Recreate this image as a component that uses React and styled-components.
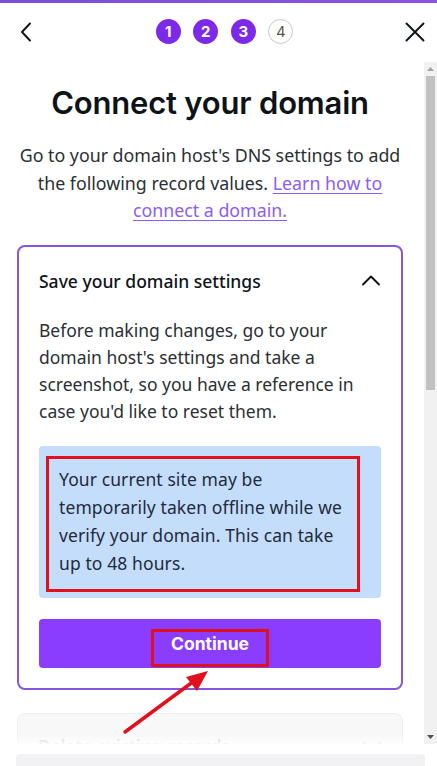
import React from "react";
import styled, { createGlobalStyle } from "styled-components";

const Global = createGlobalStyle`
  html, body { margin: 0; padding: 0; background: #fff; }
  body { font-family: "Noto Sans", "Open Sans", sans-serif; color: #0e1318; }
  * { box-sizing: border-box; }
`;

const Page = styled.div`
  position: relative;
  width: 437px;
  height: 766px;
  overflow: hidden;
  display: flex;
  flex-direction: column;
  background: #fff;
`;

const TopLine = styled.div`
  height: 3px;
  background: linear-gradient(90deg, #7b4fd6, #8a52e0);
  flex: none;
`;

const Header = styled.div`
  height: 57px;
  flex: none;
  display: flex;
  align-items: center;
  justify-content: space-between;
  padding: 0 10px 0 14px;
`;

const IconButton = styled.button`
  width: 24px;
  height: 24px;
  border: 0;
  background: none;
  padding: 0;
  display: flex;
  align-items: center;
  justify-content: center;
  color: #0e1318;
`;

const Steps = styled.div`
  display: flex;
  gap: 12.5px;
  margin-left: 8px;
`;

const Step = styled.div`
  width: 25px;
  height: 25px;
  border-radius: 50%;
  display: flex;
  align-items: center;
  justify-content: center;
  font-family: "Inter", "Liberation Sans", sans-serif;
  font-size: 15px;
  font-weight: ${(p) => (p.$done ? 700 : 400)};
  background: ${(p) => (p.$done ? "#7d2ae8" : "#fff")};
  color: ${(p) => (p.$done ? "#fff" : "#555")};
  border: ${(p) => (p.$done ? "none" : "1px solid #c9c9cc")};
`;

const Body = styled.div`
  flex: 1;
  display: flex;
  min-height: 0;
`;

const Content = styled.div`
  position: relative;
  width: 424px;
  padding: 0 21px 0 17px;
  overflow: hidden;
`;

const Title = styled.h1`
  margin: 24px 0 0;
  text-align: center;
  font-family: "Inter", "Liberation Sans", sans-serif;
  font-weight: 600;
  font-size: 31px;
  line-height: 38px;
  letter-spacing: -0.2px;
  color: #0e1318;
`;

const Intro = styled.p`
  margin: 20px 0 0;
  text-align: center;
  font-size: 17.8px;
  line-height: 27.5px;
  color: #2b2f33;
`;

const Link = styled.a`
  color: #8b5cf6;
  text-decoration: underline;
  text-underline-offset: 3px;
  text-decoration-thickness: 1px;
`;

const Card = styled.div`
  margin-top: 20px;
  border: 2px solid #8457e0;
  border-radius: 8px;
  padding: 22px 20px 20px;
`;

const CardHeader = styled.div`
  display: flex;
  align-items: center;
  justify-content: space-between;
  font-size: 17.5px;
  font-weight: 500;
  line-height: 24px;
  color: #0e1318;
`;

const CardText = styled.p`
  margin: 24px 0 0;
  font-size: 17.5px;
  line-height: 27px;
  color: #2b2f33;
`;

const Info = styled.div`
  margin-top: 21px;
  background: #c4ddfb;
  border-radius: 4px;
  padding: 10px 21px 6px 7px;
`;

const Marked = styled.div`
  border: 3px solid #e0101c;
  padding: 6px 10px 12px;
  font-size: 17.5px;
  line-height: 28px;
  letter-spacing: 0.1px;
  color: #1f2a3c;
`;

const Primary = styled.button`
  margin-top: 21px;
  width: 100%;
  height: 49px;
  border: 0;
  border-radius: 4px;
  background: #8b3dff;
  display: flex;
  align-items: center;
  justify-content: center;
  padding: 0;
`;

const ButtonLabel = styled.span`
  display: flex;
  align-items: center;
  justify-content: center;
  width: 118px;
  height: 38px;
  margin-top: 10px;
  border: 3px solid #e0101c;
  padding-bottom: 10px;
  font-family: "Inter", "Liberation Sans", sans-serif;
  font-weight: 700;
  font-size: 17.5px;
  color: #fff;
`;

const GhostCard = styled.div`
  margin-top: 23px;
  background: #f8f8f9;
  border: 1px solid #eeeef0;
  border-radius: 8px;
  padding: 20px 20px;
  display: flex;
  align-items: center;
  justify-content: space-between;
  font-size: 17.5px;
  font-weight: 500;
  color: #c6c6ca;
`;

const Fade = styled.div`
  position: absolute;
  left: 0;
  right: 0;
  bottom: 0;
  height: 10px;
  background: linear-gradient(rgba(255,255,255,0), rgba(255,255,255,0.85));
`;

const Arrow = styled.svg`
  position: absolute;
  left: 0;
  top: 0;
  pointer-events: none;
`;

const ScrollTrack = styled.div`
  width: 13px;
  margin-top: 2px;
  background: #f1f1f1;
  display: flex;
  flex-direction: column;
  align-items: center;
`;

const ScrollArrow = styled.div`
  height: 14px;
  width: 100%;
  display: flex;
  align-items: center;
  justify-content: center;
`;

const ScrollThumb = styled.div`
  width: 9px;
  height: 314px;
  background: #c1c1c1;
`;

const ScrollSpacer = styled.div`
  flex: 1;
`;

const Footer = styled.div`
  height: 22px;
  flex: none;
  padding: 10px 12px 0 16px;
  background: #fff;
`;

const FooterBox = styled.div`
  height: 100%;
  background: #f2f2f4;
  border-radius: 4px 4px 0 0;
`;

const Chevron = ({ dir = "up", color = "#0e1318", size = 20 }) => (
  <svg width={size} height={size} viewBox="0 0 20 20" fill="none">
    <path
      d={dir === "up" ? "M2 13.5 L10 5.5 L18 13.5" : "M2 6.5 L10 14.5 L18 6.5"}
      stroke={color}
      strokeWidth="1.9"
      strokeLinecap="round"
      strokeLinejoin="round"
    />
  </svg>
);

export default function App() {
  return (
    <>
      <Global />
      <Page>
        <TopLine />
        <Header>
          <IconButton aria-label="Back">
            <svg width="14" height="20" viewBox="0 0 14 20" fill="none">
              <path d="M11 1.5 L3 10 L11 18.5" stroke="#0e1318" strokeWidth="1.9" strokeLinecap="round" strokeLinejoin="round" />
            </svg>
          </IconButton>
          <Steps>
            <Step $done>1</Step>
            <Step $done>2</Step>
            <Step $done>3</Step>
            <Step>4</Step>
          </Steps>
          <IconButton aria-label="Close">
            <svg width="20" height="20" viewBox="0 0 20 20" fill="none">
              <path d="M1.5 1.5 L18.5 18.5 M18.5 1.5 L1.5 18.5" stroke="#0e1318" strokeWidth="1.9" strokeLinecap="round" />
            </svg>
          </IconButton>
        </Header>
        <Body>
          <Content>
            <Title>Connect your domain</Title>
            <Intro>
              Go to your domain host's DNS settings to add the following record values.{" "}
              <Link href="#">Learn how to connect a domain.</Link>
            </Intro>
            <Card>
              <CardHeader>
                Save your domain settings
                <Chevron dir="up" />
              </CardHeader>
              <CardText>
                Before making changes, go to your domain host's settings and take a screenshot, so you have a
                reference in case you'd like to reset them.
              </CardText>
              <Info>
                <Marked>
                  Your current site may be temporarily taken offline while we verify your domain. This can take up
                  to 48 hours.
                </Marked>
              </Info>
              <Primary>
                <ButtonLabel>Continue</ButtonLabel>
              </Primary>
            </Card>
            <GhostCard>
              Delete existing records
              <Chevron dir="down" color="#c6c6ca" />
            </GhostCard>
            <Fade />
          </Content>
          <ScrollTrack>
            <ScrollArrow>
              <svg width="7" height="4" viewBox="0 0 7 4"><path d="M0 4 L3.5 0 L7 4 Z" fill="#a3a3a3" /></svg>
            </ScrollArrow>
            <ScrollThumb />
            <ScrollSpacer />
            <ScrollArrow>
              <svg width="7" height="4" viewBox="0 0 7 4"><path d="M0 0 L3.5 4 L7 0 Z" fill="#505050" /></svg>
            </ScrollArrow>
          </ScrollTrack>
        </Body>
        <Footer>
          <FooterBox />
        </Footer>
        <Arrow width="437" height="766" viewBox="0 0 437 766">
          <line x1="125" y1="732" x2="194" y2="681" stroke="#e0101c" strokeWidth="3.5" strokeLinecap="round" />
          <path d="M208 671 L186 677 L197 691 Z" fill="#e0101c" />
        </Arrow>
      </Page>
    </>
  );
}
